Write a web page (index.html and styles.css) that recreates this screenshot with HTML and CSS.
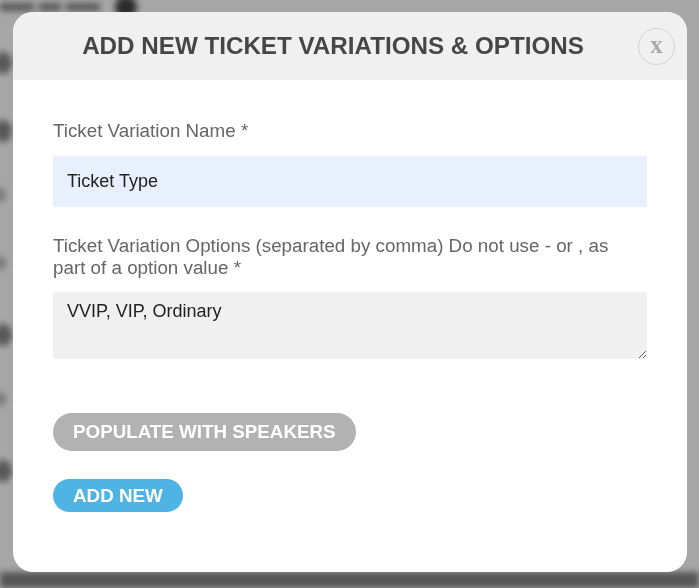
FILE: index.html
```html
<!doctype html>
<html lang="en">
  <head>
    <meta charset="UTF-8" />
    <meta name="viewport" content="width=device-width, initial-scale=1.0" />
    <title>Add new ticket variations &amp; options</title>
    <link rel="stylesheet" href="styles.css">
  </head>
  <body>
    <!-- blurred page behind the modal -->
    <div class="page">
      <div class="page-question">
        <span class="bar"></span>
        <span class="bar short"></span>
        <span class="bar"></span>
        <span class="help"></span>
      </div>
      <div class="page-rows">
        <div class="page-row"><span class="dot"></span></div>
        <div class="page-row"><span class="dot"></span></div>
        <div class="page-row"><span class="dot small"></span></div>
        <div class="page-row"><span class="dot small"></span></div>
        <div class="page-row"><span class="dot"></span></div>
        <div class="page-row"><span class="dot small"></span></div>
        <div class="page-row"><span class="dot"></span></div>
      </div>
      <div class="page-footer"></div>
    </div>
    <div class="overlay"></div>

    <div class="modal">
      <div class="modal-header">
        <h2 class="modal-title">Add New Ticket Variations &amp; Options</h2>
        <button class="close-button" type="button">x</button>
      </div>

      <form class="modal-body">
        <label class="field-label" for="variationName">Ticket Variation Name *</label>
        <input class="field-input" id="variationName" type="text" value="Ticket Type" />

        <label class="field-label second" for="variationOptions">
          Ticket Variation Options (separated by comma) Do not use - or , as
          part of a option value *
        </label>
        <textarea class="field-textarea" id="variationOptions">VVIP, VIP, Ordinary</textarea>

        <div class="actions">
          <button type="button" class="pill-button grey">Populate with speakers</button>
          <button type="button" class="pill-button blue">Add new</button>
        </div>
      </form>
    </div>
  </body>
</html>
```

FILE: styles.css
```css
html,
body {
  margin: 0;
  height: 100%;
}
body {
  font-family: "Liberation Sans", Arial, sans-serif;
  background-color: #ffffff;
  overflow: hidden;
}
/* page behind the modal */
.page {
  height: 100%;
  display: flex;
  flex-direction: column;
  filter: blur(3px);
}
.page-question {
  display: flex;
  align-items: center;
  gap: 5px;
  height: 18px;
  margin-top: -2px;
}
.bar {
  width: 34px;
  height: 8px;
  background-color: #888;
}
.bar.short {
  width: 22px;
}
.help {
  width: 22px;
  height: 22px;
  margin-left: 10px;
  border-radius: 50%;
  background-color: #444;
}
.page-rows {
  flex: 1;
  display: flex;
  flex-direction: column;
  gap: 44px;
  padding-top: 36px;
}
.page-row {
  height: 24px;
}
.dot {
  display: block;
  width: 18px;
  height: 22px;
  margin-left: -6px;
  border-radius: 50%;
  background-color: #888;
}
.dot.small {
  width: 12px;
  height: 14px;
  background-color: #bbb;
}
.page-footer {
  height: 16px;
  background-color: #838383;
}
.overlay {
  position: fixed;
  inset: 0;
  background-color: rgba(0, 0, 0, 0.35);
}

/* modal */
.modal {
  position: absolute;
  top: 12px;
  left: 13px;
  width: 674px;
  height: 560px;
  background-color: #fff;
  border-radius: 20px;
  overflow: hidden;
}
.modal-header {
  height: 68px;
  display: flex;
  align-items: center;
  padding-left: 15px;
  background-color: #f0f0f0;
}
.modal-title {
  flex: 1;
  margin: 0;
  text-align: center;
  text-transform: uppercase;
  font-size: 24.2px;
  font-weight: bold;
  color: #464646;
}
.close-button {
  width: 37px;
  height: 37px;
  margin-right: 12px;
  padding: 0 0 4px;
  border: 1px solid #cfcfcf;
  border-radius: 50%;
  background: transparent;
  font-family: "Liberation Serif", "Times New Roman", serif;
  font-weight: bold;
  font-size: 25px;
  line-height: 1;
  color: #aaa;
  cursor: pointer;
}
.modal-body {
  display: flex;
  flex-direction: column;
  align-items: flex-start;
  padding: 40px 40px 0;
}
.field-label {
  max-width: 580px;
  font-size: 18.8px;
  line-height: 22px;
  color: #666;
}
.field-label.second {
  margin-top: 28px;
}
.field-input,
.field-textarea {
  box-sizing: border-box;
  width: 594px;
  border: none;
  outline: none;
  font-family: inherit;
  font-size: 18px;
  color: #222;
}
.field-input {
  height: 51px;
  margin-top: 14px;
  padding: 0 14px;
  background-color: #e8f0fe;
}
.field-textarea {
  height: 67px;
  margin-top: 13px;
  padding: 9px 14px;
  background-color: #f0f0f0;
  resize: vertical;
}
.actions {
  display: flex;
  flex-direction: column;
  align-items: flex-start;
  gap: 28px;
  margin-top: 54px;
}
.pill-button {
  border: none;
  border-radius: 20px;
  color: #fff;
  font-family: inherit;
  font-weight: bold;
  font-size: 18.8px;
  text-transform: uppercase;
  cursor: pointer;
}
.pill-button.grey {
  height: 38px;
  padding: 0 20px;
  background-color: #b2b2b2;
}
.pill-button.blue {
  height: 33px;
  padding: 0 20px;
  background-color: #4fb4e5;
}
.pill-button.blue:hover {
  background-color: #3ea6da;
}
```
